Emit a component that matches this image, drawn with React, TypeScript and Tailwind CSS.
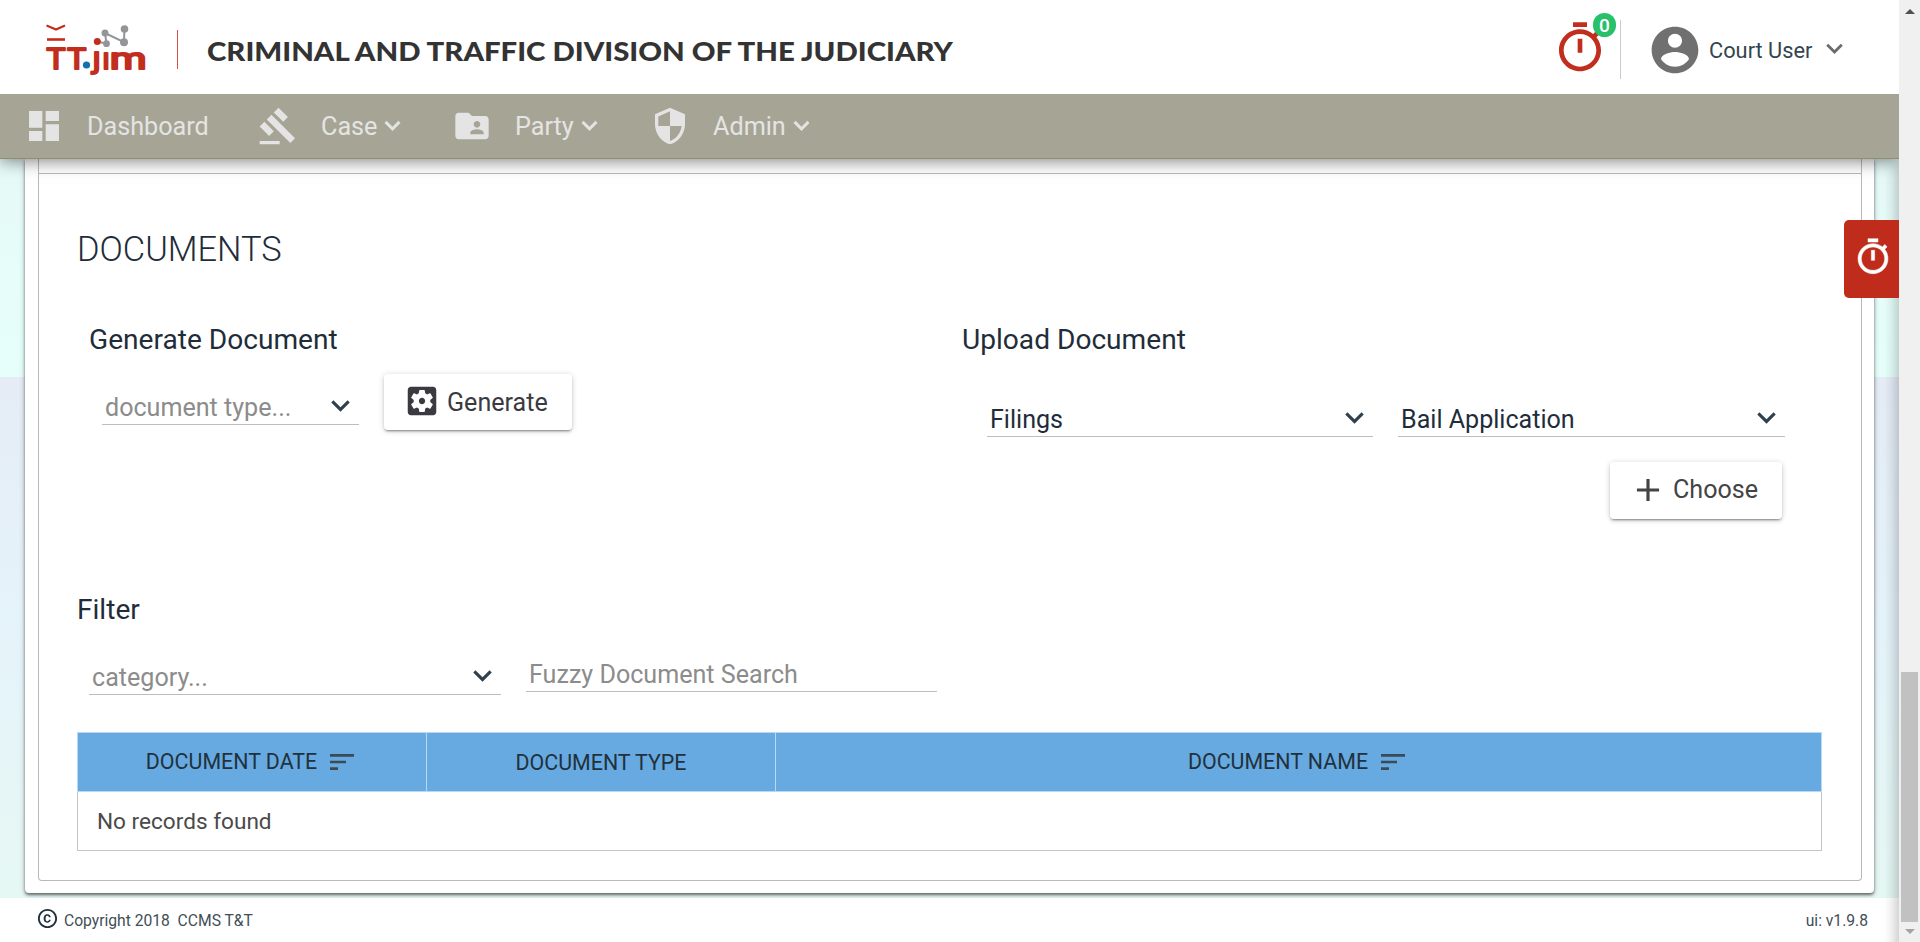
import type { ReactNode } from "react";

const ICONS = {
  dashboard: "M3 13h8V3H3v10zm0 8h8v-6H3v6zm10 0h8V11h-8v10zm0-18v6h8V3h-8z",
  gavel:
    "M1 21h12v2H1v-2zM5.245 8.07l2.83-2.827 14.14 14.142-2.828 2.828L5.245 8.07zM12.317 1l5.657 5.656-2.83 2.83-5.654-5.66L12.317 1zM3.825 9.485l5.657 5.657-2.828 2.828-5.657-5.657 2.828-2.828z",
  folderShared:
    "M20 6h-8l-2-2H4c-1.1 0-1.99.9-1.99 2L2 18c0 1.1.9 2 2 2h16c1.1 0 2-.9 2-2V8c0-1.1-.9-2-2-2zm-5 3c1.1 0 2 .9 2 2s-.9 2-2 2-2-.9-2-2 .9-2 2-2zm4 8h-8v-1c0-1.33 2.67-2 4-2s4 .67 4 2v1z",
  security:
    "M12 1L3 5v6c0 5.55 3.84 10.74 9 12 5.16-1.26 9-6.45 9-12V5l-9-4zm0 10.99h7c-.53 4.12-3.28 7.79-7 8.94V12H5V6.3l7-3.11v8.8z",
  timer:
    "M15 1H9v2h6V1zm-4 13h2V8h-2v6zm8.03-6.61l1.42-1.42c-.43-.51-.9-.99-1.41-1.41l-1.42 1.42C16.07 4.74 14.12 4 12 4c-4.97 0-9 4.03-9 9s4.02 9 9 9 9-4.03 9-9c0-2.12-.74-4.07-1.97-5.61zM12 20c-3.87 0-7-3.13-7-7s3.13-7 7-7 7 3.13 7 7-3.13 7-7 7z",
  account:
    "M12 2C6.48 2 2 6.48 2 12s4.48 10 10 10 10-4.48 10-10S17.52 2 12 2zm0 3c1.66 0 3 1.34 3 3s-1.34 3-3 3-3-1.34-3-3 1.34-3 3-3zm0 14.2c-2.5 0-4.71-1.28-6-3.22.03-1.99 4-3.08 6-3.08 1.99 0 5.97 1.09 6 3.08-1.29 1.94-3.5 3.22-6 3.22z",
  chevron: "M7.41 8.59L12 13.17l4.59-4.58L18 10l-6 6-6-6 1.41-1.41z",
  settings:
    "M12 10c-1.1 0-2 .9-2 2s.9 2 2 2 2-.9 2-2-.9-2-2-2zm7-7H5c-1.11 0-2 .9-2 2v14c0 1.1.89 2 2 2h14c1.11 0 2-.9 2-2V5c0-1.1-.89-2-2-2zm-1.75 9c0 .23-.02.46-.05.68l1.48 1.16c.13.11.17.3.08.45l-1.4 2.42c-.09.15-.27.21-.43.15l-1.74-.7c-.36.28-.76.51-1.18.69l-.26 1.85c-.03.17-.18.3-.35.3h-2.8c-.17 0-.32-.13-.35-.29l-.26-1.85c-.43-.18-.82-.41-1.18-.69l-1.74.7c-.16.06-.34 0-.43-.15l-1.4-2.42c-.09-.15-.05-.34.08-.45l1.48-1.16c-.03-.23-.05-.46-.05-.69 0-.23.02-.46.05-.68l-1.48-1.16c-.13-.11-.17-.3-.08-.45l1.4-2.42c.09-.15.27-.21.43-.15l1.74.7c.36-.28.76-.51 1.18-.69l.26-1.85c.03-.17.18-.3.35-.3h2.8c.17 0 .32.13.35.29l.26 1.85c.43.18.82.41 1.18.69l1.74-.7c.16-.06.34 0 .43.15l1.4 2.42c.09.15.05.34-.08.45l-1.48 1.16c.03.23.05.46.05.69z",
  add: "M19 13h-6v6h-2v-6H5v-2h6V5h2v6h6v2z",
  sort: "M3 18h6v-2H3v2zM3 6v2h18V6H3zm0 7h12v-2H3v2z",
  copyright:
    "M10.08 10.86c.05-.33.16-.62.3-.87s.34-.46.59-.62c.24-.15.54-.22.91-.23.23.01.44.05.63.13.2.09.38.21.52.36s.25.33.34.53.13.42.14.64h1.79c-.02-.47-.11-.9-.28-1.29s-.4-.73-.7-1.01-.66-.5-1.08-.66-.88-.23-1.39-.23c-.65 0-1.22.11-1.7.34s-.88.53-1.2.92-.56.84-.71 1.36S8 11.29 8 11.87v.27c0 .58.08 1.12.23 1.64s.39.97.71 1.35.72.69 1.2.91 1.05.34 1.7.34c.47 0 .91-.08 1.32-.23s.77-.36 1.08-.63.56-.58.74-.94.29-.74.3-1.15h-1.79c-.01.21-.06.4-.15.58s-.21.33-.36.46-.32.23-.52.3c-.19.07-.39.09-.6.1-.36-.01-.66-.08-.89-.23-.25-.16-.45-.37-.59-.62s-.25-.55-.3-.88-.08-.67-.08-1v-.27c0-.35.03-.68.08-1.01zM12 2C6.48 2 2 6.48 2 12s4.48 10 10 10 10-4.48 10-10S17.52 2 12 2zm0 18c-4.41 0-8-3.59-8-8s3.59-8 8-8 8 3.59 8 8-3.59 8-8 8z",
};

function Icon({ name, className }: { name: keyof typeof ICONS; className: string }) {
  return (
    <svg viewBox="0 0 24 24" fill="currentColor" className={`block shrink-0 ${className}`}>
      <path d={ICONS[name]} />
    </svg>
  );
}

function Logo() {
  return (
    <svg viewBox="36 16 120 66" className="block h-[66px] w-[120px] shrink-0">
      <g fill="none" stroke="#c22e1d" strokeLinejoin="round">
        <path d="M46.5 25.6l9.5 4 9-4" strokeWidth="2.2" />
        <path d="M47 39.5h18" strokeWidth="2.6" />
      </g>
      <g
        fill="#c22e1d"
        stroke="#c22e1d"
        strokeWidth="2.1"
        strokeLinejoin="round"
        fontFamily="Roboto, sans-serif"
        fontSize="29"
      >
        <text x="46.4" y="68.500" textLength="19" lengthAdjust="spacingAndGlyphs">T</text>
        <text x="67.200" y="68.500" textLength="19" lengthAdjust="spacingAndGlyphs">T</text>
        <text x="92.6" y="68" textLength="8" lengthAdjust="spacingAndGlyphs">ȷ</text>
        <text x="102.500" y="68.500">ı</text>
        <text x="110" y="68.500" textLength="36.500" lengthAdjust="spacingAndGlyphs">m</text>
      </g>
      <circle cx="86.5" cy="65" r="3.6" fill="#0f72b5" />
      <path d="M97.5 41.5l9 2.2L105 33l19 9.2.4-13.5" fill="none" stroke="#939598" strokeWidth="2" />
      <g fill="#939598">
        <circle cx="105" cy="33" r="3.5" />
        <circle cx="124.5" cy="29" r="3.8" />
        <circle cx="124" cy="42.2" r="4" />
        <circle cx="106.5" cy="43.7" r="3.4" />
      </g>
      <circle cx="97.3" cy="41.4" r="3.5" fill="#c22e1d" />
    </svg>
  );
}

function NavItem({ label, arrow = true, className }: { label: string; arrow?: boolean; className: string }) {
  return (
    <div className={`flex items-center whitespace-nowrap ${className}`}>
      <span className="mt-0.5 text-[25.2px] leading-[30px]">{label}</span>
      {arrow && <Icon name="chevron" className="size-[31px] stroke-current stroke-[0.4]" />}
    </div>
  );
}

function Select({ value, placeholder = false, className }: { value: string; placeholder?: boolean; className: string }) {
  return (
    <div
      className={`flex h-[33px] items-start justify-between border-b border-[#bdbdbd] pl-[3px] text-[25.1px] leading-[31px] ${className}`}
    >
      <span className={placeholder ? "text-[#8c8c8c]" : "text-[#1f2d3a]"}>{value}</span>
      <Icon name="chevron" className="-mt-[5px] size-[37px] text-[#2f414f]" />
    </div>
  );
}

function HeadCell({ children, className }: { children: ReactNode; className: string }) {
  return (
    <div className={`flex h-[58px] items-center justify-center gap-[9px] border-[#b7daf4] ${className}`}>
      {children}
    </div>
  );
}

const SHADOW_BUTTON =
  "shadow-[0_3px_1px_-2px_rgba(0,0,0,0.2),0_2px_2px_0_rgba(0,0,0,0.16),0_1px_6px_0_rgba(0,0,0,0.18)]";

export default function App() {
  return (
    <div className="flex h-[942px] w-[1920px] overflow-hidden bg-white font-[Roboto,sans-serif] text-[#1f2d3a]">
      <div className="relative flex w-[1899px] flex-col overflow-hidden">
        <header className="z-30 flex h-[94px] shrink-0 items-start bg-white pl-9">
          <div className="mt-4">
            <Logo />
          </div>
          <div className="mt-[30px] ml-[21px] h-[39px] w-px bg-[#d4523f]" />
          <div className="mt-[33px] ml-[29px] w-[900px] origin-left scale-x-[1.129] font-[Lato,sans-serif] text-[26px] leading-9 font-black whitespace-nowrap text-[#333]">
            CRIMINAL AND TRAFFIC DIVISION OF THE JUDICIARY
          </div>
          <div className="ml-auto flex items-start">
            <div className="relative mt-5">
              <Icon name="timer" className="size-14 text-[#c22e1d]" />
              <div className="absolute top-[-7px] left-[41px] flex h-6 w-[23px] items-center justify-center rounded-full bg-[#27c06b] text-[19px] leading-none font-medium text-white">
                0
              </div>
            </div>
            <div className="mt-5 ml-3 h-[59px] w-px bg-[#ccc]" />
            <Icon name="account" className="mt-[22px] ml-[26px] size-14 text-[#707070]" />
            <div className="mt-9 ml-[6px] w-[105px] text-[21.8px] leading-[30px] whitespace-nowrap text-[#33454f]">
              Court User
            </div>
            <Icon name="chevron" className="mt-8 mr-[48px] ml-[4px] size-[33px] text-[#6b6b6b]" />
          </div>
        </header>

        <nav className="z-20 flex h-[65px] shrink-0 items-center border-b border-[#918d6e] bg-[#a6a494] pb-px pl-6 text-[#e4e4e4] shadow-[0_2px_16px_rgba(0,0,0,0.5)]">
          <Icon name="dashboard" className="size-10" />
          <NavItem label="Dashboard" arrow={false} className="ml-[23px] w-[171px]" />
          <Icon name="gavel" className="size-10" />
          <NavItem label="Case" className="ml-[23px] w-[131px]" />
          <Icon name="folderShared" className="size-10" />
          <NavItem label="Party" className="ml-[23px] w-[135px]" />
          <Icon name="security" className="size-10" />
          <NavItem label="Admin" className="ml-[23px]" />
        </nav>

        <main className="h-[739px] shrink-0 bg-[linear-gradient(to_bottom,#e6faf8_0px,#e6fffb_218px,#e5ecf6_218px,#e5f3fa_460px,#e6f8f4_739px)] pr-[25px] pl-[25px]">
          <div className="h-[734px] rounded-b-[4px] bg-white pr-3 pl-[13px] shadow-[0_2px_3px_rgba(0,0,0,0.5),0_1px_6px_rgba(0,0,0,0.2)]">
            <section className="h-[722px] rounded-b-[4px] border border-t-0 border-[#b9b9b9]">
              <div className="h-[15px] border-b border-[#b9b9b9]" />
              <div className="pr-[39px] pl-[38px]">
                <h2 className="pt-[55px] text-[34.4px] leading-10 font-light">DOCUMENTS</h2>

                <div className="flex h-[325px] pt-[55px] pl-3">
                  <div className="w-[873px]">
                    <h3 className="text-[28.1px] leading-8">Generate Document</h3>
                    <div className="mt-[18px] flex items-start pl-[13px]">
                      <Select value="document type..." placeholder className="mt-[18px] w-[257px]" />
                      <button
                        className={`ml-[25px] flex h-14 w-[188px] items-center rounded-[4px] bg-white pl-[19px] text-[#3a3a40] ${SHADOW_BUTTON}`}
                      >
                        <Icon name="settings" className="-mt-0.5 size-[38px]" />
                        <span className="mt-0.5 ml-[6px] text-[25.1px] leading-[30px]">Generate</span>
                      </button>
                    </div>
                  </div>
                  <div className="w-[823px]">
                    <h3 className="text-[28.1px] leading-8">Upload Document</h3>
                    <div className="mt-[48px] flex gap-[25px] pl-[25px]">
                      <Select value="Filings" className="w-[386px]" />
                      <Select value="Bail Application" className="w-[387px]" />
                    </div>
                    <div className="mt-[25px] flex justify-end pr-[3px]">
                      <button
                        className={`flex h-[57px] w-[172px] items-center rounded-[4px] bg-white pl-[19px] text-[#444] ${SHADOW_BUTTON}`}
                      >
                        <Icon name="add" className="-mt-px size-[38px]" />
                        <span className="ml-[6px] -mt-px text-[25.1px] leading-[30px]">Choose</span>
                      </button>
                    </div>
                  </div>
                </div>

                <h3 className="text-[28.1px] leading-8">Filter</h3>
                <div className="mt-[33px] flex h-9 items-start gap-[25px] pl-3">
                  <Select value="category..." placeholder className="mt-[3px] w-[412px]" />
                  <div className="h-[33px] w-[411px] border-b border-[#bdbdbd] pl-[3px] text-[25.1px] leading-[31px] text-[#8c8c8c]">
                    Fuzzy Document Search
                  </div>
                </div>

                <div className="mt-[37px] text-[#22313c]">
                  <div className="grid grid-cols-[349px_349px_1fr] border border-[#b7daf4] bg-[#66aae1] text-[21.4px] leading-[26px]">
                    <HeadCell className="border-r">
                      <span>DOCUMENT DATE</span>
                      <Icon name="sort" className="size-8 text-[#3c4a55]" />
                    </HeadCell>
                    <HeadCell className="border-r">
                      <span className="mt-0.5">DOCUMENT TYPE</span>
                    </HeadCell>
                    <HeadCell className="">
                      <span>DOCUMENT NAME</span>
                      <Icon name="sort" className="size-8 text-[#3c4a55]" />
                    </HeadCell>
                  </div>
                  <div className="h-[59px] border border-t-0 border-[#c4c4c4] pt-[15px] pl-[19px] text-[22.6px] leading-[30px] text-[#4a4a4a]">
                    No records found
                  </div>
                </div>
              </div>
            </section>
          </div>
        </main>

        <footer className="z-10 flex h-11 shrink-0 items-start rounded-t-[5px] bg-white pr-[31px] pl-9 text-[15.65px] leading-5 text-[#3f4e57]">
          <Icon name="copyright" className="mt-[9px] size-[23px] text-[#22313c]" />
          <span className="mt-[13px] ml-[5px] whitespace-pre">Copyright 2018&nbsp; CCMS T&amp;T</span>
          <span className="mt-[13px] ml-auto">ui: v1.9.8</span>
        </footer>

        <div className="absolute top-[159px] right-[-10px] z-10 h-[800px] w-[10px] shadow-[0_0_16px_rgba(0,0,0,0.4)]" />
        <div className="absolute top-[220px] right-0 z-10 h-[78px] w-[55px] rounded-l-[5px] bg-[#bf2c1b] pt-[17px] pl-[9px] text-white">
          <Icon name="timer" className="size-10 stroke-current stroke-[0.3]" />
        </div>
      </div>

      <div className="flex w-[21px] flex-col items-center bg-[#f0f0f0]">
        <div className="mt-[9px] h-0 w-0 border-x-[5px] border-b-[5px] border-x-transparent border-b-[#505050]" />
        <div className="mt-[658px] h-[250px] w-[17px] bg-[#c1c1c1]" />
        <div className="mt-[7px] h-0 w-0 border-x-[5px] border-t-[5px] border-x-transparent border-t-[#a3a3a3]" />
      </div>
    </div>
  );
}
